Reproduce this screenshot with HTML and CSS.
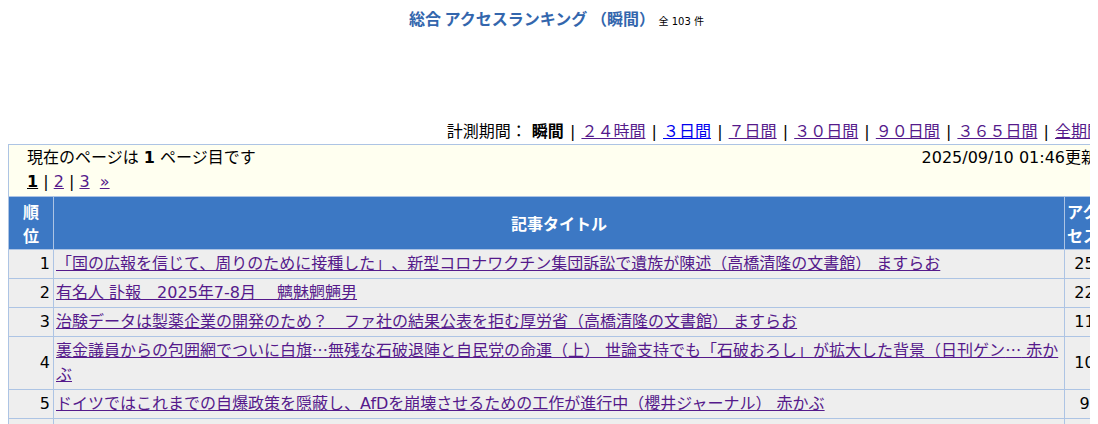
FILE: index.html
```html
<!DOCTYPE html>
<html lang="ja">
<head>
<meta charset="utf-8">
<title>総合 アクセスランキング （瞬間）</title>
<link rel="stylesheet" href="styles.css">
</head>
<body>
<div class="page">
  <h1 class="ttl"><span class="ttl-main">総合 アクセスランキング （瞬間）</span> <span class="ttl-count">全 103 件</span></h1>
  <div class="spacer"></div>
  <div class="period">計測期間： <b>瞬間</b> <span class="sep">|</span> <a class="v" href="#">２４時間</a> <span class="sep">|</span> <a class="u" href="#">３日間</a> <span class="sep">|</span> <a class="v" href="#">７日間</a> <span class="sep">|</span> <a class="v" href="#">３０日間</a> <span class="sep">|</span> <a class="v" href="#">９０日間</a> <span class="sep">|</span> <a class="v" href="#">３６５日間</a> <span class="sep">|</span> <a class="v" href="#">全期間</a></div>
  <table class="rank">
    <colgroup><col class="col-rank"><col class="col-title"><col class="col-acc"></colgroup>
    <tr>
      <td colspan="3" class="info">
        <div class="info-top"><span>現在のページは <b>1</b> ページ目です</span><span class="date">2025/09/10 01:46更新</span></div>
        <div class="pager"><b class="cur">1</b> | <a class="v" href="#">2</a> | <a class="v" href="#">3</a> &nbsp;<a class="v" href="#">»</a></div>
      </td>
    </tr>
    <tr class="head">
      <th>順<br>位</th>
      <th>記事タイトル</th>
      <th class="h-acc">アク<br>セス</th>
    </tr>
    <tr>
      <td class="num">1</td>
      <td class="title"><a class="v" href="#">「国の広報を信じて、周りのために接種した」、新型コロナワクチン集団訴訟で遺族が陳述（高橋清隆の文書館） ますらお</a></td>
      <td class="acc">25</td>
    </tr>
    <tr>
      <td class="num">2</td>
      <td class="title"><a class="v" href="#">有名人 訃報　2025年7-8月　 魑魅魍魎男</a></td>
      <td class="acc">22</td>
    </tr>
    <tr>
      <td class="num">3</td>
      <td class="title"><a class="v" href="#">治験データは製薬企業の開発のため？　ファ社の結果公表を拒む厚労省（高橋清隆の文書館） ますらお</a></td>
      <td class="acc">11</td>
    </tr>
    <tr>
      <td class="num">4</td>
      <td class="title"><a class="v" href="#">裏金議員からの包囲網でついに白旗<span class="cjk">…</span>無残な石破退陣と自民党の命運（上） 世論支持でも「石破おろし」が拡大した背景（日刊ゲン<span class="cjk">…</span> 赤かぶ</a></td>
      <td class="acc">10</td>
    </tr>
    <tr>
      <td class="num">5</td>
      <td class="title"><a class="v" href="#">ドイツではこれまでの自爆政策を隠蔽し、AfDを崩壊させるための工作が進行中（櫻井ジャーナル） 赤かぶ</a></td>
      <td class="acc">9</td>
    </tr>
    <tr>
      <td class="num">6</td>
      <td class="title">&nbsp;</td>
      <td class="acc">&nbsp;</td>
    </tr>
  </table>
</div>
</body>
</html>
```

FILE: styles.css
```css
html {
  overflow: hidden;
}

body {
  margin: 8px;
  font-family: "DejaVu Sans", "Noto Sans CJK JP", sans-serif;
  font-size: 16px;
  line-height: 24px;
  color: #000;
  background: #fff;
  text-spacing-trim: space-all;
}

.page {
  width: 1097px;
}

.ttl {
  margin: 0;
  text-align: center;
  font-family: "Noto Sans CJK JP", sans-serif;
  font-size: 16px;
  line-height: 20px;
  font-weight: normal;
}

.ttl-main {
  font-weight: bold;
  color: #3366ad;
}

.ttl-count {
  font-size: 10px;
  line-height: 1;
  font-family: "DejaVu Sans", "Noto Sans CJK JP", sans-serif;
}

.spacer {
  height: 92px;
}

.period {
  text-align: right;
  padding-right: 2px;
}

.sep {
  padding: 0 1px;
}

a.v {
  color: #551a8b;
}

a.u {
  color: #0000ee;
}

.cjk {
  font-family: "Noto Sans CJK JP", sans-serif;
  line-height: 1;
}

.rank {
  width: 1097px;
  table-layout: fixed;
  border-collapse: collapse;
  border: 1px solid #adc4e4;
}

.col-rank {
  width: 45px;
}

.col-acc {
  width: 40px;
}

.rank td,
.rank th {
  border: 1px solid #adc4e4;
  padding: 2px 3px;
  line-height: 24px;
}

.info {
  background: #fffff0;
  padding: 1px 7px 2px 18px !important;
}

.info-top {
  display: flex;
  justify-content: space-between;
}

.pager .cur {
  text-decoration: underline;
}

.head th {
  background: #3c78c4;
  color: #fff;
  font-family: "Noto Sans CJK JP", sans-serif;
  font-weight: bold;
  text-align: center;
  vertical-align: middle;
}

.head th.h-acc {
  text-align: left;
  padding-left: 2px;
  white-space: nowrap;
  overflow: hidden;
}

.rank td.num,
.rank td.title,
.rank td.acc {
  background: #eeeeee;
}

.num {
  text-align: right;
}

.rank td.title {
  padding-left: 2px;
}

.acc {
  text-align: center;
}
```
